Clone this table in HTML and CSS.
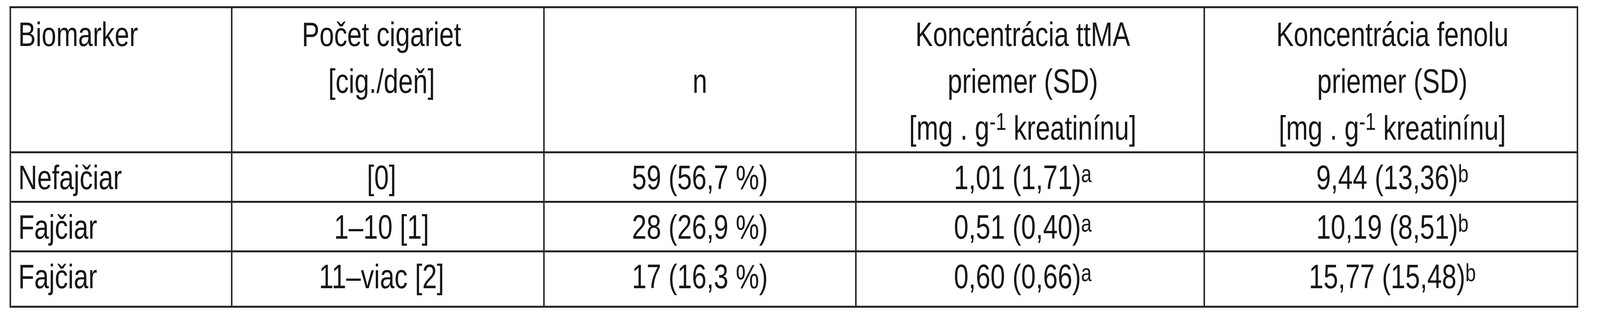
FILE: index.html
```html
<!DOCTYPE html>
<html lang="sk">
<head>
<meta charset="utf-8">
<title>Biomarker</title>
<link rel="stylesheet" href="styles.css">
</head>
<body>
<div class="frame" id="frame">
<table class="data">
  <colgroup>
    <col class="c1">
    <col class="c2">
    <col class="c3">
    <col class="c4">
    <col class="c5">
  </colgroup>
  <thead>
    <tr class="head">
      <th class="col-bio">Biomarker</th>
      <th class="col-cig">Počet cigariet<br>[cig./deň]</th>
      <th class="col-n mid">n</th>
      <th class="col-tt">Koncentrácia ttMA<br>priemer (SD)<br>[mg . g<sup class="exp">-1</sup> kreatinínu]</th>
      <th class="col-fe">Koncentrácia fenolu<br>priemer (SD)<br>[mg . g<sup class="exp">-1</sup> kreatinínu]</th>
    </tr>
  </thead>
  <tbody>
    <tr class="r1">
      <td class="col-bio">Nefajčiar</td>
      <td class="col-cig">[0]</td>
      <td class="col-n">59 (56,7 %)</td>
      <td class="col-tt">1,01 (1,71)<sup class="note">a</sup></td>
      <td class="col-fe">9,44 (13,36)<sup class="note">b</sup></td>
    </tr>
    <tr class="r2">
      <td class="col-bio">Fajčiar</td>
      <td class="col-cig">1–10 [1]</td>
      <td class="col-n">28 (26,9 %)</td>
      <td class="col-tt">0,51 (0,40)<sup class="note">a</sup></td>
      <td class="col-fe">10,19 (8,51)<sup class="note">b</sup></td>
    </tr>
    <tr class="r3">
      <td class="col-bio">Fajčiar</td>
      <td class="col-cig">11–viac [2]</td>
      <td class="col-n">17 (16,3 %)</td>
      <td class="col-tt">0,60 (0,66)<sup class="note">a</sup></td>
      <td class="col-fe">15,77 (15,48)<sup class="note">b</sup></td>
    </tr>
  </tbody>
</table>
</div>
<script src="app.js"></script>
</body>
</html>
```

FILE: styles.css
```css
:root {
  --sx: 0.76489;
}

html, body {
  margin: 0;
  padding: 0;
  background: #ffffff;
  overflow: hidden;
}

body {
  font-family: "Liberation Sans", Arial, Helvetica, sans-serif;
  color: #161616;
}

/* the table is laid out at the reference's 5355px design width and
   squeezed horizontally to fit the real viewport width */
.frame {
  width: 5300px;
  height: 790px;
  transform: scaleX(var(--sx));
  transform-origin: 0 0;
}

.data {
  box-sizing: border-box;
  margin: 16px 0 0 32px;
  width: 5250px;
  table-layout: fixed;
  border-collapse: separate;
  border-spacing: 0;
  border-top: 5px solid #242424;
  border-left: 5px solid #242424;
  font-size: 88px;
  line-height: 120px;
}

.c1 { width: 741px; }
.c2 { width: 1045px; }
.c3 { width: 1044px; }
.c4 { width: 1166px; }
.c5 { width: 1249px; }

.data th,
.data td {
  box-sizing: border-box;
  font-weight: normal;
  text-align: center;
  vertical-align: top;
  white-space: nowrap;
  padding: 2px 0 0 0;
  border-right: 5px solid #242424;
  border-bottom: 5px solid #242424;
}

.data th {
  padding-top: 7px;
}

.data .mid {
  vertical-align: middle;
}

.head { height: 371px; }
.r1 { height: 119px; }
.r2 { height: 125px; }
.r3 { height: 142px; }

.data .col-bio {
  text-align: left;
  padding-left: 24px;
}

.data .col-cig {
  padding-right: 42px;
}

.data .col-tt {
  padding-right: 49px;
}

.data .col-fe {
  padding-left: 10px;
}

sup {
  line-height: 0;
  font-size: 0.72em;
}

.note {
  vertical-align: 0.28em;
}

.exp {
  vertical-align: 0.4em;
}
```

FILE: app.js
```js
(function () {
  var design = 5355;
  var w = document.documentElement.clientWidth || window.innerWidth || design;
  var sx = Math.min(1, w / design);
  document.documentElement.style.setProperty('--sx', String(sx));
})();
```
